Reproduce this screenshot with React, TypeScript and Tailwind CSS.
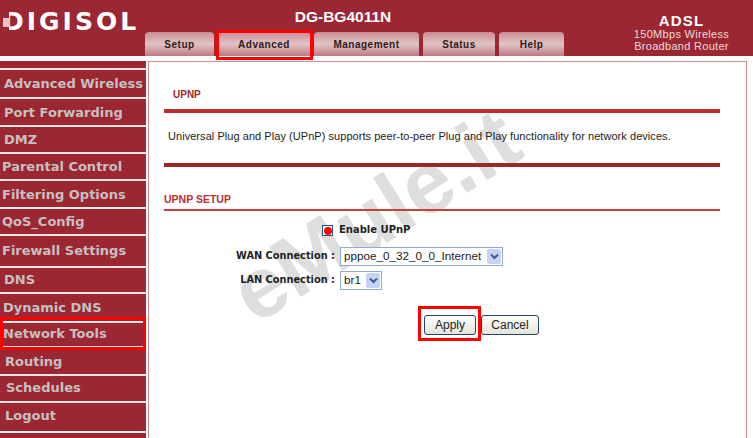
const tabs = [
  { label: 'Setup', width: 'w-[69px]' },
  { label: 'Advanced', width: 'w-[92px]', boxed: true },
  { label: 'Management', width: 'w-[105px]' },
  { label: 'Status', width: 'w-[72px]' },
  { label: 'Help', width: 'w-[65px]' },
];

const menu = [
  { label: 'Advanced Wireless', h: 'h-[29px]', pl: 'pl-[4px]' },
  { label: 'Port Forwarding', h: 'h-[28px]', pl: 'pl-[4px] pt-[2px]' },
  { label: 'DMZ', h: 'h-[27px]', pl: 'pl-[4px]' },
  { label: 'Parental Control', h: 'h-[27px]', pl: 'pl-[2px]' },
  { label: 'Filtering Options', h: 'h-[28px]', pl: 'pl-[2px] pt-[2px]' },
  { label: 'QoS_Config', h: 'h-[27px]', pl: 'pl-[2px]' },
  { label: 'Firewall Settings', h: 'h-[32px]', pl: 'pl-[2px]' },
  { label: 'DNS', h: 'h-[26px]', pl: 'pl-[4px]' },
  { label: 'Dynamic DNS', h: 'h-[29px]', pl: 'pl-[3px]' },
  { label: 'Network Tools', h: 'h-[25px]', pl: 'pl-[3px] pb-[2px]', boxed: true },
  { label: 'Routing', h: 'h-[28px]', pl: 'pl-[5px] pt-[2px]' },
  { label: 'Schedules', h: 'h-[27px]', pl: 'pl-[6px] pb-[2px]' },
  { label: 'Logout', h: 'h-[30px]', pl: 'pl-[5px] pb-[2px]' },
];

function Chevron() {
  return (
    <span className="w-[14px] h-[15px] bg-[#c5d3f5] rounded-[2px] flex items-center justify-center">
      <svg width="9" height="7" viewBox="0 0 9 7">
        <path d="M1 1.5 L4.5 5 L8 1.5" fill="none" stroke="#3d5a94" strokeWidth="2" />
      </svg>
    </span>
  );
}

function Select({ value, width }: { value: string; width: string }) {
  return (
    <div className={`${width} h-[19px] border border-[#8fa9cf] bg-white flex items-center justify-between pl-[3px] pr-[1px] font-['Liberation_Sans',sans-serif] text-[11.7px] text-[#222]`}>
      <span>{value}</span>
      <Chevron />
    </div>
  );
}

function Field({ label, children }: { label: string; children: React.ReactNode }) {
  return (
    <div className="flex items-center h-[24px]">
      <div className="w-[176px] pr-[5px] text-right font-['DejaVu_Sans',sans-serif] font-bold text-[9.8px] text-[#222] whitespace-nowrap">
        {label} :
      </div>
      {children}
    </div>
  );
}

export default function App() {
  return (
    <div className="relative w-[753px] h-[438px] overflow-hidden bg-white font-['Liberation_Sans',sans-serif]">
      {/* Header */}
      <header className="h-[56px] bg-[#9a2731] flex">
        <div className="relative w-[145px] pt-[7px] pl-[3px] font-['DejaVu_Sans',sans-serif] font-bold text-[25px] leading-[30px] tracking-[3px] text-white whitespace-nowrap">
          DIGISOL
          {/* square mark cut into the D of the logo */}
          <span className="absolute left-[3px] top-[12px] w-[6px] h-[20px] bg-[#9a2731]" />
          <span className="absolute left-[3px] top-[18px] w-[7px] h-[9px] bg-[#e3c3c5]" />
        </div>
        <div className="w-[480px] flex flex-col">
          <div className="h-[32px] pt-[7px] pr-[84px] text-center text-[15.5px] leading-[20px] font-bold text-white">
            DG-BG4011N
          </div>
          <nav className="flex gap-[4px]">
            {tabs.map((t) => (
              <div
                key={t.label}
                className={`${t.width} h-[24px] rounded-t-[4px] bg-gradient-to-b from-[#c98d93] via-[#e0c3c6] to-[#bd7a82] flex items-center justify-center text-[10px] font-bold tracking-[0.5px] text-[#2b1a1c]`}
              >
                {t.label}
              </div>
            ))}
          </nav>
        </div>
        <div className="flex-1 pt-[13px] pr-[15px] text-center text-white leading-none">
          <div className="text-[15px] font-bold tracking-[1.2px] leading-[15px]">ADSL</div>
          <div className="text-[11px] leading-[12px] tracking-[0.3px] text-[#eed9db]">150Mbps Wireless</div>
          <div className="text-[11px] leading-[12px] tracking-[0.3px] text-[#eed9db]">Broadband Router</div>
        </div>
      </header>

      <div className="flex h-[382px] pt-[5px]">
        {/* Sidebar */}
        <aside className="w-[146px] h-full bg-[#9a2731] pt-[7px]">
          <div className="border-t-2 border-[#f1e6e7]">
            {menu.map((m) => (
              <div
                key={m.label}
                className={`${m.h} ${m.pl} flex items-center border-b-2 border-[#f1e6e7] font-['DejaVu_Sans',sans-serif] font-bold text-[13px] text-[#c8bfc1] whitespace-nowrap`}
              >
                {m.label}
              </div>
            ))}
          </div>
        </aside>

        {/* Main panel */}
        <main className="relative overflow-hidden ml-[2px] w-[599px] h-[400px] border border-[#cf8d90] bg-white">
          {/* Watermark */}
          <div className="absolute left-[46px] top-[108px] w-[360px] text-center -rotate-[32deg] font-['Liberation_Sans',sans-serif] font-bold text-[86px] leading-[90px] text-[#dedede] pointer-events-none whitespace-nowrap">
            eMule.it
          </div>

          <div className="relative pl-[15px] pr-[26px]">
            <h2 className="pl-[9px] pt-[25px] h-[47px] text-[10px] font-bold text-[#a5282e]">UPNP</h2>
            <div className="h-[4px] bg-[#b9302f]" />
            <p className="pl-[4px] mt-[15px] h-[35px] text-[11px] tracking-[0.05px] text-[#222] whitespace-nowrap">
              Universal Plug and Play (UPnP) supports peer-to-peer Plug and Play functionality for network devices.
            </p>
            <div className="h-[4px] bg-[#9a2828]" />
            <h2 className="mt-[25px] h-[17px] text-[10.5px] font-bold text-[#b9302f]">UPNP SETUP</h2>
            <div className="h-[2px] bg-[#c9403f]" />

            <div className="mt-[10px] h-[16px] pl-[158px] flex items-center gap-[6px]">
              <span className="mt-[3px] w-[11px] h-[11px] border border-[#27527e] bg-white flex items-center justify-center">
                <span className="w-[8px] h-[8px] rounded-full bg-[#f00]" />
              </span>
              <span className="font-['DejaVu_Sans',sans-serif] font-bold text-[10px] text-[#222]">Enable UPnP</span>
            </div>
            <div className="mt-[7px]">
              <Field label="WAN Connection">
                <Select value="pppoe_0_32_0_0_Internet" width="w-[163px]" />
              </Field>
              <Field label="LAN Connection">
                <Select value="br1" width="w-[42px]" />
              </Field>
            </div>
            <div className="mt-[23px] pl-[260px] flex gap-[5px]">
              <button className="w-[52px] h-[20px] rounded-[3px] border border-[#1f4470] bg-gradient-to-b from-white to-[#e6e3d8] text-[12px] text-[#222]">
                Apply
              </button>
              <button className="w-[58px] h-[20px] rounded-[3px] border border-[#1f4470] bg-gradient-to-b from-white to-[#e6e3d8] text-[12px] text-[#222]">
                Cancel
              </button>
            </div>
          </div>
        </main>
      </div>

      {/* Red highlight boxes */}
      <div className="absolute left-[216px] top-[30px] w-[97px] h-[30px] border-[3px] border-[#f00]" />
      <div className="absolute left-0 top-[317px] w-[146px] h-[33px] border-[3px] border-[#f00]" />
      <div className="absolute left-[418px] top-[306px] w-[63px] h-[35px] border-[3px] border-[#f00]" />
    </div>
  );
}
